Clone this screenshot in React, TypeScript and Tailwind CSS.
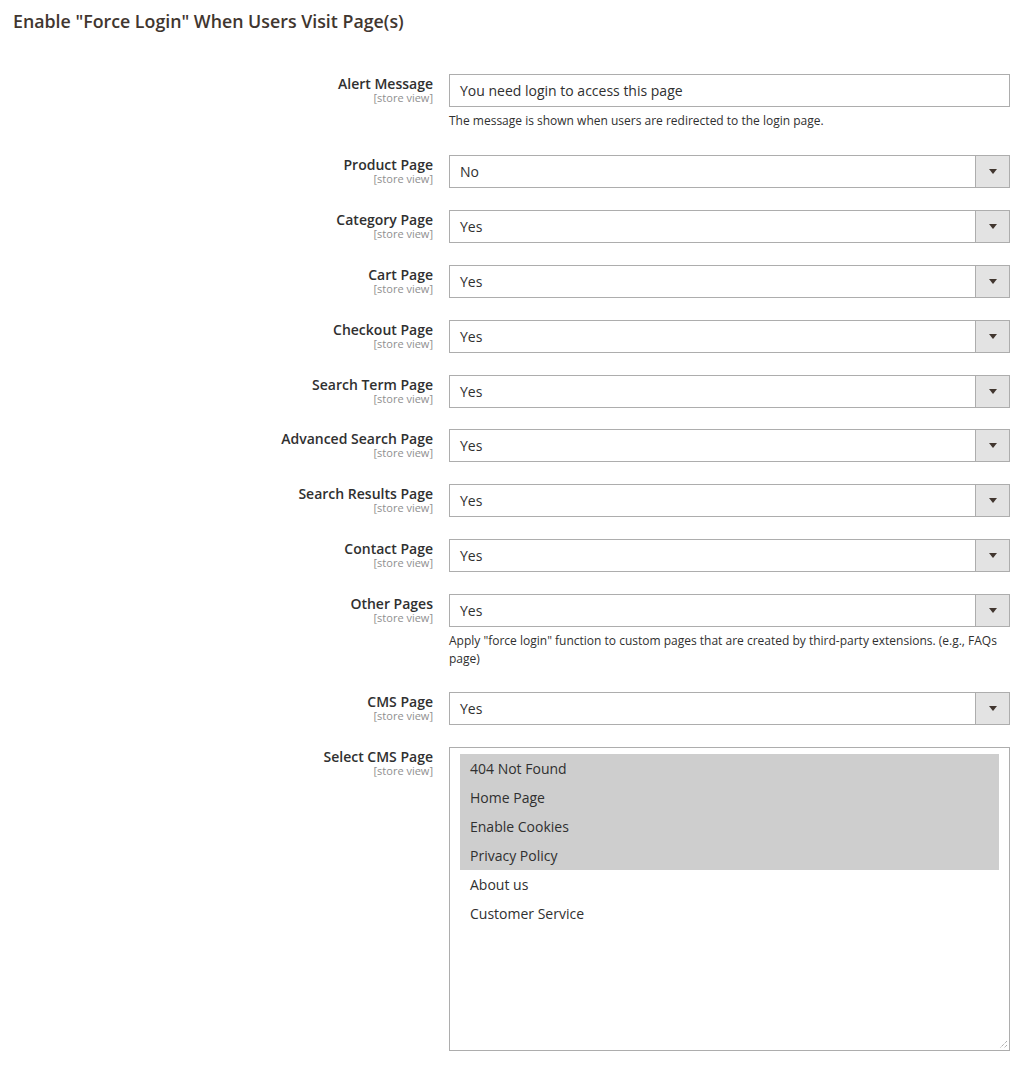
const rows: { label: string; value: string; note?: string }[] = [
  { label: 'Product Page', value: 'No' },
  { label: 'Category Page', value: 'Yes' },
  { label: 'Cart Page', value: 'Yes' },
  { label: 'Checkout Page', value: 'Yes' },
  { label: 'Search Term Page', value: 'Yes' },
  { label: 'Advanced Search Page', value: 'Yes' },
  { label: 'Search Results Page', value: 'Yes' },
  { label: 'Contact Page', value: 'Yes' },
  {
    label: 'Other Pages',
    value: 'Yes',
    note: 'Apply "force login" function to custom pages that are created by third-party extensions. (e.g., FAQs page)',
  },
  { label: 'CMS Page', value: 'Yes' },
];

const cmsPages = [
  { name: '404 Not Found', selected: true },
  { name: 'Home Page', selected: true },
  { name: 'Enable Cookies', selected: true },
  { name: 'Privacy Policy', selected: true },
  { name: 'About us', selected: false },
  { name: 'Customer Service', selected: false },
];

const FieldLabel = ({ label }: { label: string }) => (
  <div className="w-[433px] shrink-0 text-right pt-[2px]">
    <div className="text-[14px] leading-[16px] font-semibold text-[#303030]">{label}</div>
    <div className="text-[11px] leading-[12px] text-[#8f8f8f]">[store view]</div>
  </div>
);

const Note = ({ children }: { children: React.ReactNode }) => (
  <p className="mt-[5px] text-[12px] leading-[18px] text-[#303030]">{children}</p>
);

const Select = ({ value }: { value: string }) => (
  <div className="flex h-[33px] border border-[#adadad] bg-white">
    <div className="flex-1 flex items-center pl-[10px] text-[14px] text-[#303030]">{value}</div>
    <div className="w-[34px] flex items-center justify-center border-l border-[#adadad] bg-[#e3e3e3]">
      <svg width="8" height="5" viewBox="0 0 8 5">
        <path d="M0 0h8L4 5z" fill="#41362f" />
      </svg>
    </div>
  </div>
);

export default function App() {
  return (
    <div className="min-h-screen bg-white font-['Open_Sans',sans-serif]">
      <h2 className="pl-[13px] pt-[9px] text-[17.8px] leading-[24px] font-semibold text-[#41362f]">
        Enable "Force Login" When Users Visit Page(s)
      </h2>

      <div className="mt-[41px] pr-[22px]">
        <div className="flex mb-[25px]">
          <FieldLabel label="Alert Message" />
          <div className="ml-4 flex-1">
            <div className="h-[33px] flex items-center border border-[#adadad] pl-[10px] text-[14px] text-[#303030]">
              You need login to access this page
            </div>
            <Note>The message is shown when users are redirected to the login page.</Note>
          </div>
        </div>

        {rows.map((row) => (
          <div key={row.label} className={`flex ${row.note ? 'mb-[24px]' : 'mb-[21.875px]'}`}>
            <FieldLabel label={row.label} />
            <div className="ml-4 flex-1">
              <Select value={row.value} />
              {row.note && <Note>{row.note}</Note>}
            </div>
          </div>
        ))}

        <div className="flex">
          <FieldLabel label="Select CMS Page" />
          <div className="ml-4 flex-1">
            <div className="relative h-[304px] border border-[#adadad] px-[10px] py-[6px]">
              {cmsPages.map((p) => (
                <div
                  key={p.name}
                  className={`h-[29px] flex items-center pl-[10px] text-[14px] text-[#303030] ${
                    p.selected ? 'bg-[#cecece]' : ''
                  }`}
                >
                  {p.name}
                </div>
              ))}
              <svg className="absolute right-[1px] bottom-[1px]" width="9" height="9" viewBox="0 0 9 9">
                <path d="M8 1L1 8M8 5L5 8" stroke="#8a8a8a" strokeWidth="1" strokeDasharray="1 1" />
              </svg>
            </div>
          </div>
        </div>
      </div>
    </div>
  );
}
